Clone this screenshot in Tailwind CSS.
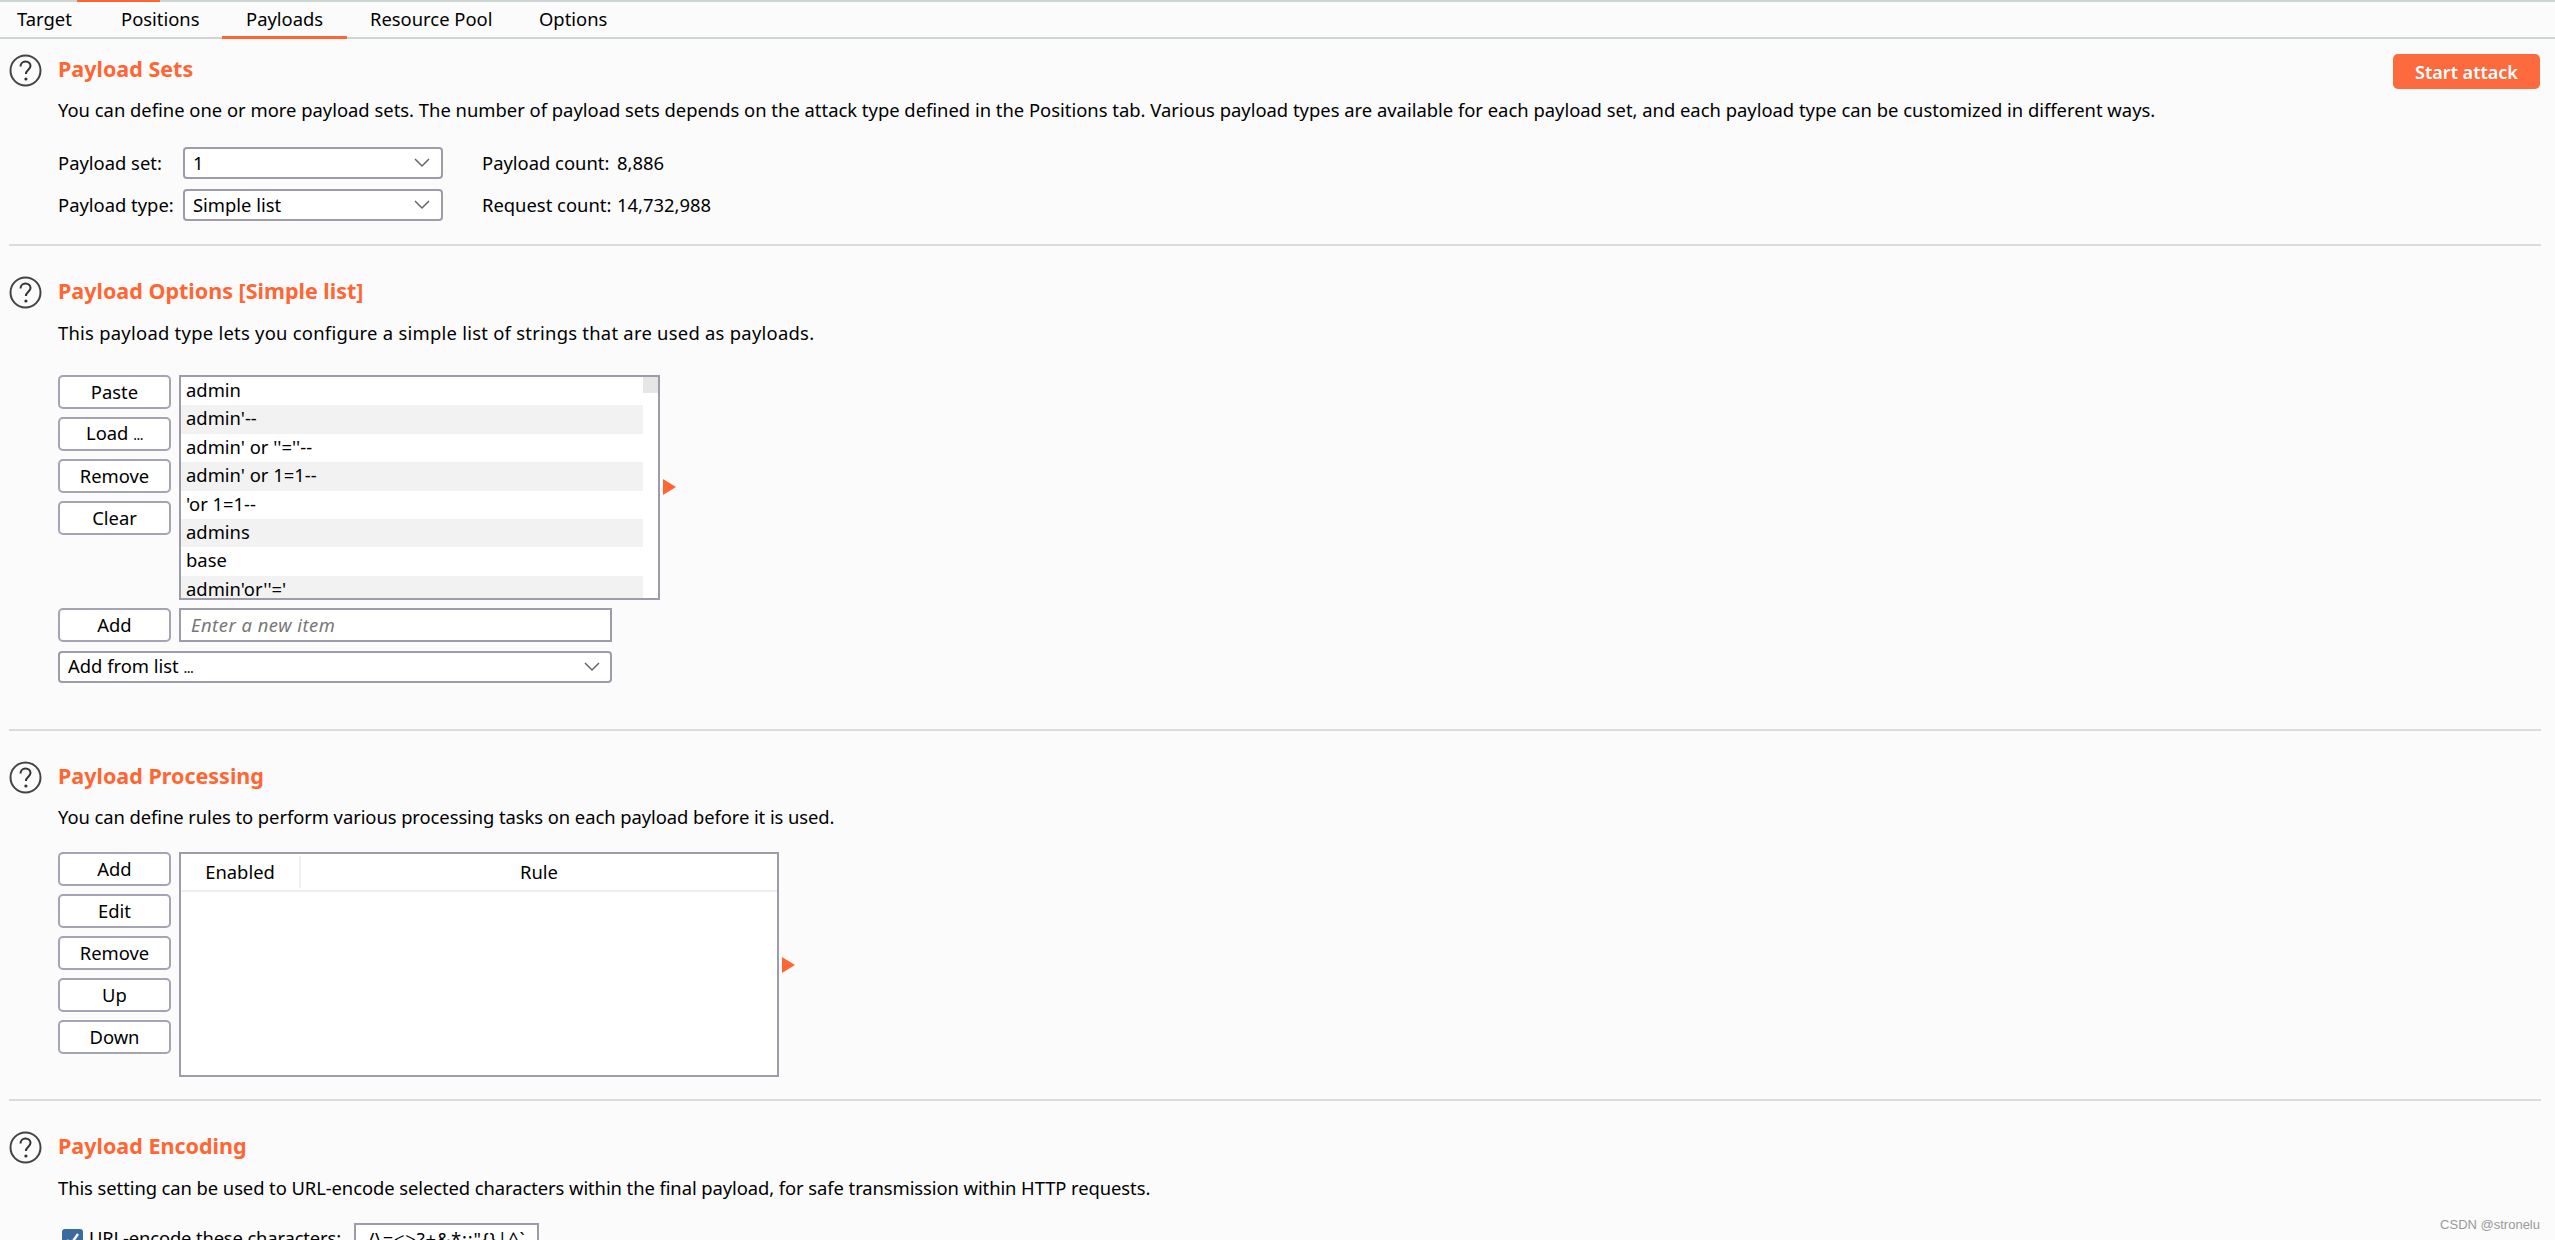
<!DOCTYPE html>
<html lang="en">
<head>
  <meta charset="UTF-8">
  <title>Intruder Payloads</title>
  <script src="https://cdn.jsdelivr.net/npm/@tailwindcss/browser@4"></script>
</head>
<body class="bg-[#fbfbfb] text-black font-['Noto_Sans',sans-serif] text-[18.4px] leading-[24px] h-[1240px] overflow-hidden relative">
  <!-- tab bar -->
  <div class="h-[39px] border-t-2 border-b-2 border-[#ccd4d4] relative flex">
    <div class="absolute left-[77px] w-[83px] -top-[2px] h-[2px] bg-[#ff6633]"></div>
    <div class="w-[97px] pl-[17px] pt-[5px]">Target</div>
    <div class="w-[125px] pl-[24px] pt-[5px]">Positions</div>
    <div class="w-[125px] pl-[24px] pt-[5px] border-b-[3px] border-[#ff6633] h-[37px]">Payloads</div>
    <div class="w-[192px] pl-[23px] pt-[5px]">Resource Pool</div>
    <div class="pt-[5px]">Options</div>
  </div>

  <!-- Payload Sets -->
  <section class="ml-[9px] mr-[14px] h-[207px] border-b-2 border-[#dcdcdc] relative">
    <div class="flex items-center gap-[16px] pt-[15px]">
      <svg class="w-[33px] h-[33px]" viewBox="0 0 33 33" fill="none"><circle cx="16.5" cy="16.5" r="15" stroke="#444" stroke-width="2"/><path d="M11.5 12.5c0-3 2.2-5 5-5s5 2 5 4.6c0 3.6-4.6 3.8-4.6 8" stroke="#333" stroke-width="2"/><circle cx="16.9" cy="25" r="1.6" fill="#333"/></svg>
      <h2 class="text-[#ff6633] font-bold text-[21.5px] -mt-[4px]">Payload Sets</h2>
    </div>
    <button class="absolute left-[2384px] top-[15px] w-[147px] h-[35px] rounded-[5px] bg-[#fc6a3d] text-white font-semibold text-[18px]">Start attack</button>
    <p class="ml-[49px] mt-[11px] whitespace-nowrap">You can define one or more payload sets. The number of payload sets depends on the attack type defined in the Positions tab. Various payload types are available for each payload set, and each payload type can be customized in different ways.</p>
    <div class="ml-[49px] mt-[25px] grid grid-cols-[125px_260px_39px_135px_auto] gap-y-[10px] items-center w-max">
      <span>Payload set:</span>
      <div class="h-[32px] border-2 border-[#9c9cab] rounded-[4px] bg-white flex items-center justify-between pl-[8px] pr-[10px]">1<svg class="w-[18px] h-[10px]" viewBox="0 0 18 10" fill="none"><path d="M2 1l7 7 7-7" stroke="#666" stroke-width="1.5"/></svg></div>
      <span></span>
      <span>Payload count:</span>
      <span>8,886</span>
      <span>Payload type:</span>
      <div class="h-[32px] border-2 border-[#9c9cab] rounded-[4px] bg-white flex items-center justify-between pl-[8px] pr-[10px]">Simple list<svg class="w-[18px] h-[10px]" viewBox="0 0 18 10" fill="none"><path d="M2 1l7 7 7-7" stroke="#666" stroke-width="1.5"/></svg></div>
      <span></span>
      <span>Request count:</span>
      <span>14,732,988</span>
    </div>
  </section>

  <!-- Payload Options -->
  <section class="ml-[9px] mr-[14px] h-[485px] border-b-2 border-[#dcdcdc]">
    <div class="flex items-center gap-[16px] pt-[30px]">
      <svg class="w-[33px] h-[33px]" viewBox="0 0 33 33" fill="none"><circle cx="16.5" cy="16.5" r="15" stroke="#444" stroke-width="2"/><path d="M11.5 12.5c0-3 2.2-5 5-5s5 2 5 4.6c0 3.6-4.6 3.8-4.6 8" stroke="#333" stroke-width="2"/><circle cx="16.9" cy="25" r="1.6" fill="#333"/></svg>
      <h2 class="text-[#ff6633] font-bold text-[21.5px] -mt-[4px]">Payload Options [Simple list]</h2>
    </div>
    <p class="ml-[49px] mt-[12px] tracking-[0.26px]">This payload type lets you configure a simple list of strings that are used as payloads.</p>
    <div class="ml-[49px] mt-[30px] flex gap-[8px]">
      <div class="flex flex-col gap-[8px] w-[113px]">
        <button class="h-[34px] border-2 border-[#a4a4b4] rounded-[5px] bg-white">Paste</button>
        <button class="h-[34px] border-2 border-[#a4a4b4] rounded-[5px] bg-white">Load <span class="text-[14px] tracking-[-0.5px]">...</span></button>
        <button class="h-[34px] border-2 border-[#a4a4b4] rounded-[5px] bg-white">Remove</button>
        <button class="h-[34px] border-2 border-[#a4a4b4] rounded-[5px] bg-white">Clear</button>
      </div>
      <div class="w-[481px] h-[225px] border-2 border-[#9c9cab] bg-white overflow-hidden flex">
        <ul class="w-[462px]">
          <li class="h-[28.4px] pl-[5px] leading-[25px]">admin</li>
          <li class="h-[28.4px] pl-[5px] leading-[25px] bg-[#f2f2f2]">admin'--</li>
          <li class="h-[28.4px] pl-[5px] leading-[25px]">admin' or ''=''--</li>
          <li class="h-[28.4px] pl-[5px] leading-[25px] bg-[#f2f2f2]">admin' or 1=1--</li>
          <li class="h-[28.4px] pl-[5px] leading-[25px]">'or 1=1--</li>
          <li class="h-[28.4px] pl-[5px] leading-[25px] bg-[#f2f2f2]">admins</li>
          <li class="h-[28.4px] pl-[5px] leading-[25px]">base</li>
          <li class="h-[28.4px] pl-[5px] leading-[25px] bg-[#f2f2f2]">admin'or''='</li>
        </ul>
        <div class="w-[15px] h-[16px] bg-[#e6e6e6]"></div>
      </div>
      <div class="w-0 h-0 self-center mt-[-1px] -ml-[5px] border-y-[8px] border-y-transparent border-l-[13px] border-l-[#ff6633]"></div>
    </div>
    <div class="ml-[49px] mt-[8px] flex gap-[8px]">
      <button class="w-[113px] h-[34px] border-2 border-[#a4a4b4] rounded-[5px] bg-white">Add</button>
      <div class="w-[433px] h-[34px] border-2 border-[#9c9cab] bg-white pl-[10px] leading-[30px] italic tracking-[0.5px] text-[#777]">Enter a new item</div>
    </div>
    <div class="ml-[49px] mt-[9px] w-[554px] h-[32px] border-2 border-[#9c9cab] rounded-[4px] bg-white flex items-center justify-between pl-[8px] pr-[9px]"><span>Add from list <span class="text-[14px] tracking-[-0.5px]">...</span></span><svg class="w-[18px] h-[10px]" viewBox="0 0 18 10" fill="none"><path d="M2 1l7 7 7-7" stroke="#666" stroke-width="1.5"/></svg></div>
  </section>

  <!-- Payload Processing -->
  <section class="ml-[9px] mr-[14px] h-[370px] border-b-2 border-[#dcdcdc]">
    <div class="flex items-center gap-[16px] pt-[30px]">
      <svg class="w-[33px] h-[33px]" viewBox="0 0 33 33" fill="none"><circle cx="16.5" cy="16.5" r="15" stroke="#444" stroke-width="2"/><path d="M11.5 12.5c0-3 2.2-5 5-5s5 2 5 4.6c0 3.6-4.6 3.8-4.6 8" stroke="#333" stroke-width="2"/><circle cx="16.9" cy="25" r="1.6" fill="#333"/></svg>
      <h2 class="text-[#ff6633] font-bold text-[21.5px] -mt-[4px]">Payload Processing</h2>
    </div>
    <p class="ml-[49px] mt-[11px] tracking-[-0.07px]">You can define rules to perform various processing tasks on each payload before it is used.</p>
    <div class="ml-[49px] mt-[23px] flex gap-[8px]">
      <div class="flex flex-col gap-[8px] w-[113px]">
        <button class="h-[34px] border-2 border-[#a4a4b4] rounded-[5px] bg-white">Add</button>
        <button class="h-[34px] border-2 border-[#a4a4b4] rounded-[5px] bg-white">Edit</button>
        <button class="h-[34px] border-2 border-[#a4a4b4] rounded-[5px] bg-white">Remove</button>
        <button class="h-[34px] border-2 border-[#a4a4b4] rounded-[5px] bg-white">Up</button>
        <button class="h-[34px] border-2 border-[#a4a4b4] rounded-[5px] bg-white">Down</button>
      </div>
      <div class="w-[600px] h-[225px] border-2 border-[#9c9cab] bg-white">
        <div class="h-[38px] border-b-2 border-[#eeeeee] flex items-center text-center">
          <span class="w-[120px] h-[32px] leading-[32px] border-r-2 border-[#f0f0f0]">Enabled</span>
          <span class="flex-1 h-[32px] leading-[32px]">Rule</span>
        </div>
      </div>
      <div class="w-0 h-0 self-center mt-[1px] -ml-[5px] border-y-[8px] border-y-transparent border-l-[13px] border-l-[#ff6633]"></div>
    </div>
  </section>

  <!-- Payload Encoding -->
  <section class="ml-[9px] mr-[14px]">
    <div class="flex items-center gap-[16px] pt-[30px]">
      <svg class="w-[33px] h-[33px]" viewBox="0 0 33 33" fill="none"><circle cx="16.5" cy="16.5" r="15" stroke="#444" stroke-width="2"/><path d="M11.5 12.5c0-3 2.2-5 5-5s5 2 5 4.6c0 3.6-4.6 3.8-4.6 8" stroke="#333" stroke-width="2"/><circle cx="16.9" cy="25" r="1.6" fill="#333"/></svg>
      <h2 class="text-[#ff6633] font-bold text-[21.5px] -mt-[4px]">Payload Encoding</h2>
    </div>
    <p class="ml-[49px] mt-[12px] tracking-[-0.075px]">This setting can be used to URL-encode selected characters within the final payload, for safe transmission within HTTP requests.</p>
    <div class="ml-[53px] mt-[23px] flex items-start">
      <div class="w-[21px] h-[21px] mt-[6px] rounded-[3px] bg-[#3d6a9e] flex items-center justify-center">
        <svg class="w-[15px] h-[15px]" viewBox="0 0 15 15" fill="none"><path d="M2 8l4 4 7-10" stroke="#fff" stroke-width="2.4"/></svg>
      </div>
      <span class="ml-[6px] mt-[3px] w-[253px] whitespace-nowrap tracking-[-0.15px]">URL-encode these characters:</span>
      <div class="ml-[12px] w-[185px] h-[34px] border-2 border-[#9c9cab] bg-white text-center leading-[28px] tracking-[0.8px]">/\=&lt;&gt;?+&amp;*;:"{}|^`</div>
    </div>
  </section>

  <div class="absolute right-[15px] top-[1216px] text-[13px] leading-[18px] text-[#999] font-['Liberation_Sans',sans-serif]">CSDN @stronelu</div>
</body>
</html>
